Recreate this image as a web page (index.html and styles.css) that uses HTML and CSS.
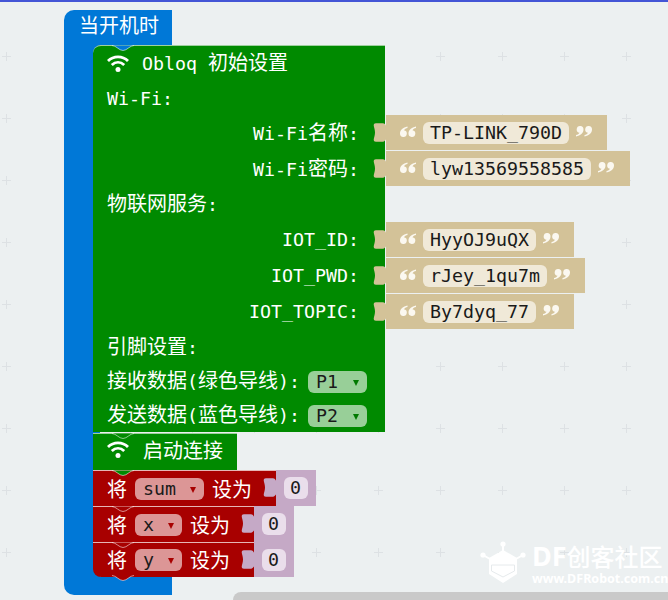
FILE: index.html
```html
<!DOCTYPE html>
<html lang="en">
<head>
  <meta charset="UTF-8" />
  <meta name="viewport" content="width=device-width, initial-scale=1.0" />
  <title>Obloq blocks</title>
  <link rel="stylesheet" href="styles.css">
</head>
<body>
<!-- Workspace grid -->
<svg class="grid" width="668" height="600">
  <defs>
    <pattern id="plus" x="2" y="52" width="62" height="62" patternUnits="userSpaceOnUse">
      <path d="M0 4.5h9M4.5 0v9" stroke="#dde1e4" stroke-width="1" />
    </pattern>
    <symbol id="wifi" viewBox="0 0 22 18">
      <path d="M1 6C6.500 .5 15.500 .5 21 6" fill="none" stroke="#fff" stroke-width="2.800" />
      <path d="M4.800 10C8.500 6.500 13.500 6.500 17.200 10" fill="none" stroke="#fff" stroke-width="2.800" />
      <circle cx="11" cy="14.500" r="2.500" fill="#fff" />
    </symbol>
    <symbol id="tab" viewBox="0 0 14 19">
      <path d="M14 3.500C13 3.500 12.500 .5 10 .3H3C1 .3 .5 1.500 .8 3 1.200 5 2 7 2 9.500S1.200 14 .8 16C.5 17.500 1 18.700 3 18.700H10C12.500 18.500 13 15.500 14 15.500z" fill="currentColor" />
    </symbol>
    <symbol id="tooth" viewBox="0 0 22 7">
      <path d="M0 .5h22C18 .5 15 5.500 11 5.500S4 .5 0 .5z" fill="currentColor" />
      <path d="M0 .5C4 .5 7 5.500 11 5.500S18 .5 22 .5" fill="none" stroke="rgba(255,255,255,.55)" stroke-width="1" />
    </symbol>
    <symbol id="quote-open" viewBox="0 0 16 11">
      <path d="M7.500 .5C3 1.500 0 4 0 7.500A3.400 3.400 0 1 0 4 4.200C4.500 3 6 2.300 7.500 2z" fill="#fbf8f0" />
      <path d="M16 .5C11.500 1.500 8.500 4 8.500 7.500A3.400 3.400 0 1 0 12.500 4.200C13 3 14.500 2.300 16 2z" fill="#fbf8f0" />
    </symbol>
    <symbol id="quote-close" viewBox="0 0 16 11">
      <g transform="rotate(180 8 5.500)">
        <path d="M7.500 .5C3 1.500 0 4 0 7.500A3.400 3.400 0 1 0 4 4.200C4.500 3 6 2.300 7.500 2z" fill="#fbf8f0" />
        <path d="M16 .5C11.500 1.500 8.500 4 8.500 7.500A3.400 3.400 0 1 0 12.500 4.200C13 3 14.500 2.300 16 2z" fill="#fbf8f0" />
      </g>
    </symbol>
  </defs>
  <rect width="668" height="600" fill="url(#plus)" />
</svg>

<div class="top-line"></div>

<div class="hat">
  <div class="hat-head"><span class="cn">当开机时</span></div>
  <div class="hat-body">
    <div class="hat-rail"></div>
    <div class="stack">

      <!-- Obloq setup -->
      <div class="row row-head">
        <div class="cell green corner-top left">
          <svg class="tooth tooth-blue"><use href="#tooth" /></svg>
          <svg class="wifi"><use href="#wifi" /></svg>
          <span class="head-text">Obloq <span class="cn">初始设置</span></span>
        </div>
      </div>
      <div class="row row-34"><div class="cell green left wifi-title">Wi-Fi:</div></div>
      <div class="row row-36">
        <div class="cell green right"><span>Wi-Fi<span class="cn">名称</span>:</span></div>
        <div class="value tan w-221"><svg class="tab"><use href="#tab" /></svg><svg class="quote open"><use href="#quote-open" /></svg><span class="input">TP-LINK_790D</span><svg class="quote close"><use href="#quote-close" /></svg></div>
      </div>
      <div class="row row-36">
        <div class="cell green right"><span>Wi-Fi<span class="cn">密码</span>:</span></div>
        <div class="value tan w-244"><svg class="tab"><use href="#tab" /></svg><svg class="quote open"><use href="#quote-open" /></svg><span class="input">lyw13569558585</span><svg class="quote close"><use href="#quote-close" /></svg></div>
      </div>
      <div class="row row-35"><div class="cell green left"><span><span class="cn">物联网服务</span>:</span></div></div>
      <div class="row row-36">
        <div class="cell green right">IOT_ID:</div>
        <div class="value tan w-188"><svg class="tab"><use href="#tab" /></svg><svg class="quote open"><use href="#quote-open" /></svg><span class="input">HyyOJ9uQX</span><svg class="quote close"><use href="#quote-close" /></svg></div>
      </div>
      <div class="row row-36">
        <div class="cell green right">IOT_PWD:</div>
        <div class="value tan w-199"><svg class="tab"><use href="#tab" /></svg><svg class="quote open"><use href="#quote-open" /></svg><span class="input">rJey_1qu7m</span><svg class="quote close"><use href="#quote-close" /></svg></div>
      </div>
      <div class="row row-36">
        <div class="cell green right">IOT_TOPIC:</div>
        <div class="value tan w-188"><svg class="tab"><use href="#tab" /></svg><svg class="quote open"><use href="#quote-open" /></svg><span class="input">By7dyq_77</span><svg class="quote close"><use href="#quote-close" /></svg></div>
      </div>
      <div class="row row-34"><div class="cell green left"><span><span class="cn">引脚设置</span>:</span></div></div>
      <div class="row row-34">
        <div class="cell green left gap-row"><span class="label"><span class="cn">接收数据</span>(<span class="cn">绿色导线</span>):</span>
          <span class="dropdown drop-green">P1<i class="arrow"></i></span>
        </div>
      </div>
      <div class="row row-34">
        <div class="cell green left gap-row"><span class="label"><span class="cn">发送数据</span>(<span class="cn">蓝色导线</span>):</span>
          <span class="dropdown drop-green">P2<i class="arrow"></i></span>
        </div>
      </div>

      <!-- Connect -->
      <div class="row row-connect">
        <div class="cell green left connect">
          <svg class="tooth tooth-green"><use href="#tooth" /></svg>
          <svg class="wifi"><use href="#wifi" /></svg>
          <span class="cn">启动连接</span>
        </div>
      </div>

      <!-- Variables -->
      <div class="row row-var">
        <div class="cell red left var-sum">
          <svg class="tooth tooth-green"><use href="#tooth" /></svg>
          <span class="cn">将</span>
          <span class="dropdown drop-red drop-sum">sum<i class="arrow"></i></span>
          <span class="cn">设为</span>
        </div>
        <div class="value purple"><svg class="tab"><use href="#tab" /></svg><span class="input">0</span></div>
      </div>
      <div class="row row-var">
        <div class="cell red left var-xy">
          <svg class="tooth tooth-red"><use href="#tooth" /></svg>
          <span class="cn">将</span>
          <span class="dropdown drop-red drop-xy">x<i class="arrow"></i></span>
          <span class="cn">设为</span>
        </div>
        <div class="value purple"><svg class="tab"><use href="#tab" /></svg><span class="input">0</span></div>
      </div>
      <div class="row row-var last">
        <div class="cell red left var-xy corner-bottom">
          <svg class="tooth tooth-red"><use href="#tooth" /></svg>
          <span class="cn">将</span>
          <span class="dropdown drop-red drop-xy">y<i class="arrow"></i></span>
          <span class="cn">设为</span>
          <svg class="tooth tooth-end"><use href="#tooth" /></svg>
        </div>
        <div class="value purple"><svg class="tab"><use href="#tab" /></svg><span class="input">0</span></div>
      </div>

    </div>
  </div>
  <div class="hat-foot"></div>
</div>

<!-- Watermark -->
<div class="watermark">
  <svg class="wm-logo" width="46" height="44" viewBox="0 0 46 44">
    <path d="M23 3v8M10 18L3 14M36 18l7-4" fill="none" stroke="#fff" stroke-width="2" />
    <circle cx="23" cy="3" r="2.600" fill="#fff" />
    <circle cx="3" cy="14" r="2.600" fill="#fff" />
    <circle cx="43" cy="14" r="2.600" fill="#fff" />
    <path d="M23 9l14 8v16l-14 9-14-9V17z" fill="#fff" />
    <path d="M11.500 24h23v6l-11.500 6-11.500-6z" fill="#fff" stroke="#e6eaec" stroke-width="1" />
  </svg>
  <div class="wm-text">
    <div class="wm-name">DF<span class="wm-cn">创客社区</span></div>
    <div class="wm-url">www.DFRobot.com.cn</div>
  </div>
</div>

<div class="bottom-bar"></div>
</body>
</html>
```

FILE: styles.css
```css
/* Base Styles */
html, body {
  margin: 0;
  height: 600px;
  overflow: hidden;
}
body {
  position: relative;
  background-color: #ecf0f1;
  font-family: "DejaVu Sans Mono", monospace;
  font-size: 18.3px;
  line-height: 22px;
  color: #fff;
}
.cn {
  font-family: "Noto Sans CJK SC", sans-serif;
  font-size: 20px;
  line-height: 1;
}
.grid {
  position: absolute;
  top: 0;
  left: 0;
}
.top-line {
  position: relative;
  height: 2px;
  background: #4355d6;
}

/* Hat block */
.hat {
  position: relative;
  margin: 8px 0 0 64px;
  width: 310px;
}
.hat-head {
  width: 108px;
  height: 35px;
  box-sizing: border-box;
  padding-left: 15px;
  line-height: 33px;
  background: #0078d7;
  border-radius: 10px 0 0 0;
}
.hat-body {
  display: flex;
}
.hat-rail {
  width: 36px;
  flex: none;
  background: #0078d7;
}
.hat-foot {
  width: 108px;
  height: 18px;
  background: #0078d7;
  border-radius: 0 0 0 10px;
}
.stack {
  margin-left: -7px;
  position: relative;
}

/* Rows */
.row {
  display: flex;
  align-items: stretch;
}
.row-head { height: 36px; }
.row-34 { height: 34px; }
.row-35 { height: 35px; }
.row-36 { height: 36px; }
.row-var { height: 36px; }
.row-var.last { height: 35px; }
.cell {
  position: relative;
  box-sizing: border-box;
  display: flex;
  align-items: center;
  width: 292px;
  flex: none;
}
.left { padding-left: 14px; }
.right {
  justify-content: flex-end;
  padding-right: 26px;
}
.green { background: #008a00; }
.red {
  background: #a80000;
  border-top: 1px solid #e6b5b5;
}
.corner-top {
  border-radius: 8px 0 0 0;
  border-top: 1px solid #9fd09f;
}
.corner-bottom { border-radius: 0 0 0 8px; }
.gap-row {
  gap: 8px;
  padding-top: 1px;
}
.wifi-title { padding-top: 2px; }
.head-text { margin-left: 13px; }
.wifi {
  width: 22px;
  height: 18px;
  flex: none;
}

.connect {
  width: 144px;
  border-top: 1px solid #9fd09f;
  padding-bottom: 4px;
}
.connect .cn { margin-left: 14px; }
.row-connect { margin-top: 1px; height: 37px; }

/* Notch teeth, they sit over the top edge of the next block */
.tooth {
  position: absolute;
  left: 19px;
  top: -1px;
  width: 22px;
  height: 7px;
}
.tooth-blue { color: #0078d7; }
.tooth-green { color: #008a00; }
.tooth-red { color: #a80000; }
.tooth-end {
  top: auto;
  bottom: -5px;
  color: #a80000;
}

/* String and number values */
.value {
  position: relative;
  display: flex;
  align-items: center;
  box-sizing: border-box;
  margin: 0 0 0 1px;
}
.tan {
  background: #d3c298;
  color: #d3c298;
  padding-left: 14px;
}
.purple {
  background: #c5a9c6;
  color: #c5a9c6;
  margin-left: 0;
  padding-left: 8px;
  padding-right: 8px;
}
.w-221 { width: 221px; }
.w-244 { width: 244px; }
.w-188 { width: 188px; }
.w-199 { width: 199px; }
.row-36 .value { margin-bottom: 1px; }
.tab {
  position: absolute;
  left: -13px;
  top: 8px;
  width: 14px;
  height: 19px;
}
.quote {
  width: 16px;
  height: 11px;
  flex: none;
  margin-bottom: 3px;
}
.quote.open { margin-right: 7px; }
.quote.close { margin-left: 7px; }
.input {
  display: inline-block;
  height: 22px;
  line-height: 22px;
  padding: 0 7px;
  border-radius: 6px;
  background: #f0e9d8;
  color: #1a1a1a;
  white-space: nowrap;
}
.purple .input {
  background: #eadeeb;
  padding: 0 6px;
  width: 12px;
}

/* Dropdowns */
.dropdown {
  position: relative;
  display: inline-block;
  box-sizing: border-box;
  height: 22px;
  line-height: 22px;
  padding-left: 8px;
  border-radius: 6px;
  color: #1a1a1a;
}
.drop-green {
  width: 59px;
  background: #98cf98;
}
.drop-green .arrow { border-top-color: #007a00; }
.drop-red {
  background: #dc9696;
  margin: 0 8px;
}
.drop-red .arrow { border-top-color: #a80000; }
.drop-sum { width: 69px; }
.drop-xy { width: 47px; }
.arrow {
  position: absolute;
  right: 8px;
  top: 9px;
  border-left: 3.5px solid transparent;
  border-right: 3.5px solid transparent;
  border-top: 6px solid #000;
}
.var-sum { width: 183px; }
.var-xy { width: 161px; }

/* Watermark */
.watermark {
  position: absolute;
  left: 480px;
  top: 541px;
  display: flex;
  gap: 6px;
  color: #fff;
}
.wm-text {
  font-family: "Noto Sans", sans-serif;
  font-weight: bold;
  white-space: nowrap;
}
.wm-name {
  font-size: 27px;
  line-height: 28px;
  margin-top: 1px;
}
.wm-cn {
  font-family: "Noto Sans CJK SC", sans-serif;
  font-size: 24px;
  font-weight: 500;
}
.wm-url {
  font-size: 12.500px;
  line-height: 14px;
  margin-top: 2px;
}

.bottom-bar {
  position: absolute;
  left: 233px;
  right: 0;
  bottom: 0;
  height: 8px;
  background: #c9c9c9;
  border-radius: 8px 0 0 0;
}
```
